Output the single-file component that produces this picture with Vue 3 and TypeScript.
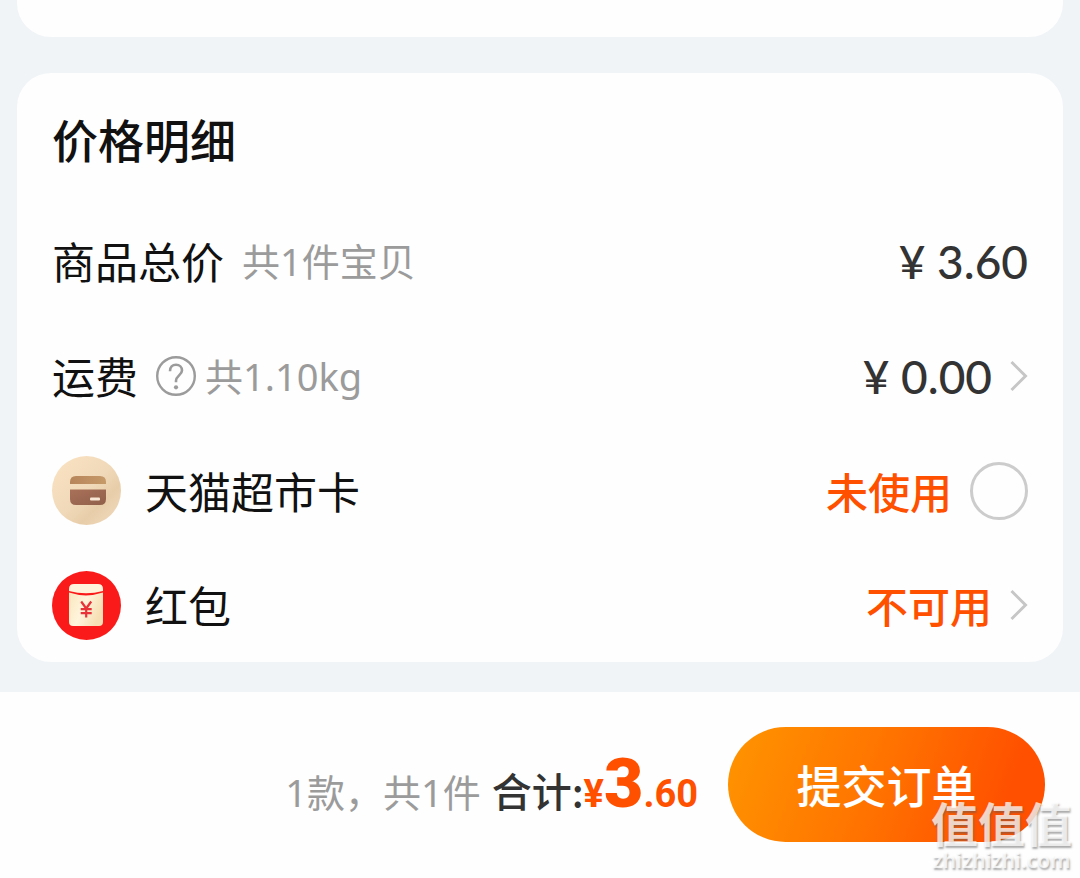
<script setup lang="ts">
import { ref } from 'vue'

const useCard = ref(false)
const count = 1
</script>

<template>
  <div class="page">
    <div class="card card-prev"></div>

    <section class="card details" aria-labelledby="details-title">
      <h2 id="details-title">价格明细</h2>

      <div class="row">
        <span class="label">商品总价</span>
        <span class="note total-note">共{{ count }}件宝贝</span>
        <span class="amount">¥ 3.60</span>
      </div>

      <div class="row">
        <span class="label">运费</span>
        <button class="plain help" type="button" aria-label="运费说明">
          <svg width="40" height="40" viewBox="0 0 40 40" fill="none">
            <circle cx="20" cy="20" r="18.8" stroke="#9b9b9b" stroke-width="2.4" />
            <path d="M14 15.2C14 11.2 16.4 8.800 20 8.800s6 2.300 6 5.600c0 4.600-6 5.400-6 10.400v1.400" stroke="#9b9b9b" stroke-width="2.6" />
            <circle cx="20" cy="31.3" r="2.1" fill="#9b9b9b" />
          </svg>
        </button>
        <span class="note">共1.10kg</span>
        <button class="plain value" type="button">
          <span class="amount">¥ 0.00</span>
          <svg class="chevron" width="18" height="32" viewBox="0 0 18 32" fill="none">
            <path d="M1.500 2L15.500 16L1.500 30" stroke="#c6c6c6" stroke-width="3" />
          </svg>
        </button>
      </div>

      <div class="row">
        <svg class="badge" width="69" height="69" viewBox="0 0 69 69">
          <defs>
            <linearGradient id="sand" x1="0" y1="0" x2="1" y2="1">
              <stop offset="0" stop-color="#fbe3c2" />
              <stop offset="0.5" stop-color="#f0d9b9" />
              <stop offset="0.7" stop-color="#e8cda9" />
              <stop offset="1" stop-color="#f1dcc0" />
            </linearGradient>
            <linearGradient id="strip" x1="0" y1="0" x2="1" y2="0">
              <stop offset="0" stop-color="#b7855b" />
              <stop offset="1" stop-color="#c69a69" />
            </linearGradient>
            <linearGradient id="body" x1="0" y1="0" x2="1" y2="1">
              <stop offset="0" stop-color="#a97059" />
              <stop offset="1" stop-color="#90604a" />
            </linearGradient>
          </defs>
          <circle cx="34.5" cy="34.5" r="34.5" fill="url(#sand)" />
          <path d="M18 28v-2q0-6 6-6h24q6 0 6 6v2z" fill="url(#strip)" />
          <path d="M18 33.500h36V43q0 6-6 6H24q-6 0-6-6z" fill="url(#body)" />
          <rect x="38" y="41.5" width="10" height="3" rx="1" fill="#f7e7d4" />
        </svg>
        <label class="label" for="use-card">天猫超市卡</label>
        <span class="status">未使用</span>
        <input id="use-card" v-model="useCard" class="check" type="checkbox" />
      </div>

      <div class="row">
        <svg class="badge" width="69" height="69" viewBox="0 0 69 69">
          <defs>
            <linearGradient id="paper" x1="0" y1="0" x2="1" y2="0.4">
              <stop offset="0" stop-color="#f9e6bd" />
              <stop offset="0.5" stop-color="#fff5dc" />
              <stop offset="1" stop-color="#f6dfb4" />
            </linearGradient>
          </defs>
          <circle cx="34.5" cy="34.5" r="34.5" fill="#fb1a1a" />
          <path d="M17 20v-2q0-5 5-5h24q5 0 5 5v2q-17 4.500-34 0z" fill="#fff3dc" />
          <path d="M17 21.600q17 5.600 34 0V51q0 4-4 4H21q-4 0-4-4z" fill="url(#paper)" />
          <path d="M29.200 30.500l5 7 5-7M34.200 37v9.500M28.700 38.200h11M28.700 42.200h11" stroke="#e8333a" stroke-width="2.2" fill="none" />
        </svg>
        <span class="label">红包</span>
        <button class="plain value" type="button">
          <span class="status">不可用</span>
          <svg class="chevron" width="18" height="32" viewBox="0 0 18 32" fill="none">
            <path d="M1.500 2L15.500 16L1.500 30" stroke="#c6c6c6" stroke-width="3" />
          </svg>
        </button>
      </div>
    </section>

    <footer class="bar">
      <p class="summary">
        <span class="note">1款，共{{ count }}件</span>
        <span class="sum-label">合计:</span>
        <span class="sum">¥<b>3</b>.60</span>
      </p>
      <button class="submit" type="button">提交订单</button>
      <div class="mark">
        <span class="mark-name">值值值</span>
        <span class="mark-site">zhizhizhi.com</span>
      </div>
    </footer>
  </div>
</template>

<style>
body {
  margin: 0;
  background: #f0f4f7;
}
</style>

<style scoped>
.page {
  display: flex;
  flex-direction: column;
  min-height: 100vh;
  box-sizing: border-box;
  background: #f0f4f7;
  color: #111;
  font-family: "Noto Sans", "Noto Sans CJK SC", sans-serif;
}
.card {
  margin: 0 17px;
  background: #fefefe;
  border-radius: 34px;
}
.card-prev {
  height: 37px;
  border-radius: 0 0 34px 34px;
  margin-bottom: 36px;
}
.details {
  padding: 33px 35px 0;
}
h2 {
  margin: 0;
  font: 500 46px/64px "Noto Sans CJK SC", sans-serif;
}
.details h2 {
  margin-bottom: 33px;
}
.row {
  display: flex;
  align-items: center;
  height: 115px;
}
.row:last-child {
  height: 114px;
}
.label {
  padding-bottom: 2px;
  font: 400 43px/60px "Noto Sans CJK SC", sans-serif;
}
.note {
  color: #9b9b9b;
  font-size: 38px;
  line-height: 60px;
}
.total-note {
  margin-left: 18px;
}
.plain {
  padding: 0;
  border: 0;
  background: none;
  cursor: pointer;
}
.help {
  display: flex;
  margin: 0 9px 0 18px;
}
.value {
  display: flex;
  align-items: center;
  margin-left: auto;
}
.amount {
  margin-left: auto;
  padding-top: 2px;
  color: #333;
  font: 500 46px/60px Lato, "Noto Sans", sans-serif;
}
.chevron {
  margin-left: 18px;
}
.badge {
  margin-right: 24px;
  flex: none;
}
.status {
  margin-left: auto;
  color: #ff5000;
  font: 500 42px/60px "Noto Sans CJK SC", sans-serif;
}
.check {
  appearance: none;
  width: 58px;
  height: 58px;
  margin: 0 0 0 18px;
  border: 3px solid #ccc;
  border-radius: 50%;
}
.check:checked {
  border-color: #ff5000;
  background: #ff5000;
}
.bar {
  position: relative;
  flex: 1;
  display: flex;
  align-items: flex-start;
  justify-content: flex-end;
  gap: 30px;
  margin-top: 30px;
  padding: 35px 35px 36px;
  background: #fefefe;
}
.summary {
  display: flex;
  align-items: baseline;
  height: 115px;
  margin: 0;
  line-height: 115px;
}
.summary .note {
  line-height: 115px;
}
.sum-label {
  margin-left: 11px;
  color: #333;
  font: 500 40px/115px "Noto Sans CJK SC", sans-serif;
}
.sum {
  color: #ff5000;
  font: 700 38px/115px Roboto, sans-serif;
}
.sum b {
  font-size: 68px;
}
.submit {
  width: 317px;
  height: 115px;
  padding: 0;
  border: 0;
  border-radius: 58px;
  background: linear-gradient(110deg, #ff9500 0%, #ff7200 48%, #ff5000 85%);
  color: #fff;
  font: 500 45px/60px "Noto Sans CJK SC", sans-serif;
  cursor: pointer;
}
.mark {
  position: absolute;
  right: 8px;
  bottom: 4px;
  display: flex;
  flex-direction: column;
  align-items: center;
  color: rgba(255, 255, 255, 0.75);
  text-shadow: 1px 2px 2px rgba(90, 90, 90, 0.5);
  pointer-events: none;
}
.mark-name {
  font: 700 47px/48px "Noto Sans CJK SC", sans-serif;
}
.mark-site {
  font: 600 21px/28px "Noto Sans", sans-serif;
}
</style>
